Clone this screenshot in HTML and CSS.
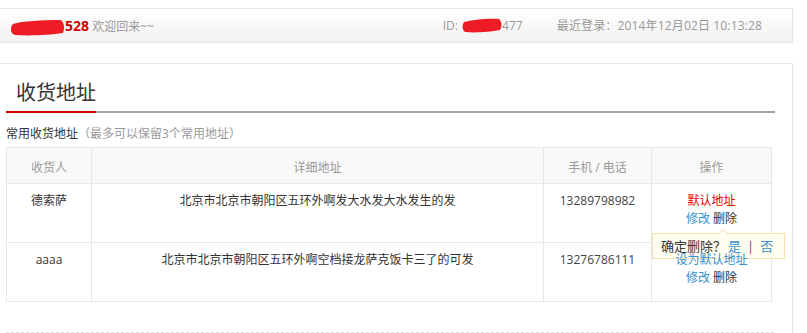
FILE: index.html
```html
<!DOCTYPE html>
<html lang="zh-CN">
<head>
    <meta charset="UTF-8">
    <title>收货地址</title>
    <link rel="stylesheet" href="styles.css">
</head>
<body>

<div class="topbar">
    <div class="welcome">
        <svg class="mask mask-name" width="55" height="17" viewBox="0 0 55 17"><path d="M3 5 C12 2 32 1 50 1 C54 2 55 8 53 14 C40 16 20 17 5 16 C0 15 0 8 3 5 Z" fill="#ee1c25"/></svg><b class="uname">528</b> 欢迎回来~~
    </div>
    <div class="meta">
        <span class="uid">ID: <svg class="mask mask-id" width="40" height="15" viewBox="0 0 40 15"><path d="M2 4 C10 2 26 0 37 1 C40 3 40 9 38 12 C28 14 12 15 3 14 C0 12 0 7 2 4 Z" fill="#ee1c25"/></svg>477</span>
        <span class="last-login">最近登录：2014年12月02日 10:13:28</span>
    </div>
</div>

<div class="panel">
    <h2 class="panel-title"><span>收货地址</span></h2>
    <p class="tip">常用收货地址<em>（最多可以保留3个常用地址）</em></p>

    <table class="addr-table">
        <colgroup>
            <col class="c-name">
            <col class="c-addr">
            <col class="c-phone">
            <col class="c-op">
        </colgroup>
        <tr>
            <th>收货人</th>
            <th>详细地址</th>
            <th>手机 / 电话</th>
            <th>操作</th>
        </tr>
        <tr>
            <td>德索萨</td>
            <td>北京市北京市朝阳区五环外啊发大水发大水发生的发</td>
            <td class="phone">13289798982</td>
            <td class="op">
                <span class="default">默认地址</span><br>
                <a href="#">修改</a> <span class="del">删除</span>
                <div class="confirm">
                    确定删除？<a href="#">是</a><span class="sep">|</span><a href="#">否</a>
                </div>
            </td>
        </tr>
        <tr>
            <td>aaaa</td>
            <td>北京市北京市朝阳区五环外啊空档接龙萨克饭卡三了的可发</td>
            <td class="phone">13276786111</td>
            <td class="op">
                <a href="#">设为默认地址</a><br>
                <a href="#">修改</a> <span class="del">删除</span>
            </td>
        </tr>
    </table>

    <div class="panel-foot"></div>
</div>

</body>
</html>
```

FILE: styles.css
```css
body {
    font-family: "Open Sans", "Noto Sans CJK SC", sans-serif;
    font-size: 12px;
    color: #333;
    background: #fff;
    margin: 8px 0 0;
    padding: 0;
}

a {
    color: #3590cf;
    text-decoration: none;
}

.topbar {
    width: 762px;
    display: flex;
    justify-content: space-between;
    padding: 0 30px 0 0;
    height: 33px;
    line-height: 33px;
    border: 1px solid #e4e4e4;
    border-left: none;
    background: linear-gradient(#fff, #f2f2f2);
    color: #999;
}

.welcome {
    padding-left: 10px;
}

.mask {
    vertical-align: middle;
}

.mask-name {
    margin-top: -1px;
}

.mask-id {
    margin: -2px 0 0 1px;
}

.uname {
    color: #c00;
    font-size: 14px;
}

.uid {
    margin-right: -2px;
}

.last-login {
    margin-left: 33px;
    letter-spacing: 0.15px;
}

.panel {
    width: 769px;
    height: 254px;
    margin-top: 20px;
    padding: 15px 17px 0 6px;
    border-top: 1px solid #e6e6e6;
    border-right: 1px solid #e6e6e6;
}

.panel-title {
    margin: 0;
    font-size: 20px;
    font-weight: normal;
    line-height: 28px;
    color: #333;
    border-bottom: 2px solid #a4a4a4;
}

.panel-title span {
    display: inline-block;
    padding: 0 0 4px 10px;
    margin-bottom: -2px;
    border-bottom: 2px solid #d40000;
}

.tip {
    margin: 12px 0 4px;
    line-height: 18px;
}

.tip em {
    font-style: normal;
    color: #999;
}

.addr-table {
    width: 765px;
    border-collapse: collapse;
    table-layout: fixed;
}

.c-name { width: 85px; }
.c-addr { width: 452px; }
.c-phone { width: 108px; }
.c-op { width: 120px; }

.addr-table th {
    height: 32px;
    padding: 3px 0 0;
    background: #f9f9f9;
    border: 1px solid #e8e8e8;
    font-weight: normal;
    color: #999;
}

.addr-table td {
    height: 50px;
    padding: 8px 0 0;
    border: 1px solid #e8e8e8;
    text-align: center;
    vertical-align: top;
    line-height: 18px;
}

.addr-table .phone {
    color: #444;
}

.addr-table .op {
    position: relative;
}

.default {
    color: #e00;
}

.confirm {
    position: absolute;
    left: 0;
    top: 49px;
    width: 123px;
    height: 24px;
    padding: 0 0 0 8px;
    line-height: 24px;
    font-size: 13px;
    text-align: left;
    white-space: nowrap;
    background: #fffdf0;
    border: 1px solid #f5dfae;
    color: #333;
}

.confirm::before,
.confirm::after {
    content: "";
    position: absolute;
    left: 65px;
    border: 5px solid transparent;
    border-top: none;
}

.confirm::before {
    top: -5px;
    border-bottom-color: #f5dfae;
}

.confirm::after {
    top: -4px;
    border-bottom-color: #fffdf0;
}

.confirm a {
    margin-left: 2px;
}

.confirm .sep {
    color: #993399;
    margin: 0 4px 0 6px;
}

.panel-foot {
    margin: 30px 1px 0 0;
    border-bottom: 1px dashed #ddd;
}
```
